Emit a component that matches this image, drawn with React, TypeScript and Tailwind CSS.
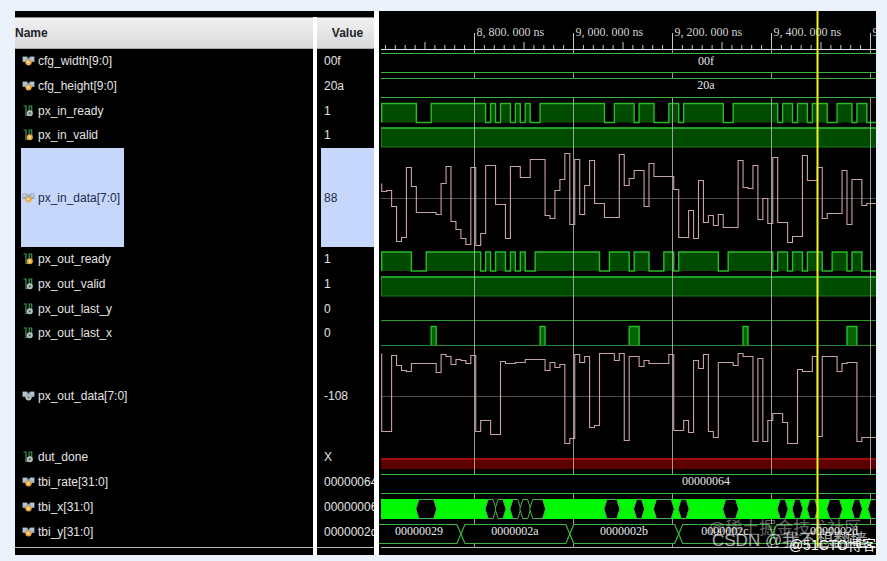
import React from 'react';
import clsx from 'clsx';

interface Signal {
  name: string;
  value: string;
  kind: 'bus' | 'wire';
  port: 'in' | 'out';
  height: string;
  selected?: boolean;
}

type Run = [start: number, level: number];
type Span = [from: number, to: number];

const signals: Signal[] = [
  { name: 'cfg_width[9:0]', value: '00f', kind: 'bus', port: 'in', height: 'h-[25px] pb-0.5' },
  { name: 'cfg_height[9:0]', value: '20a', kind: 'bus', port: 'in', height: 'h-[25px] pb-0.5' },
  { name: 'px_in_ready', value: '1', kind: 'wire', port: 'out', height: 'h-[25px] pb-0.5' },
  { name: 'px_in_valid', value: '1', kind: 'wire', port: 'in', height: 'h-6 pb-0.5' },
  { name: 'px_in_data[7:0]', value: '88', kind: 'bus', port: 'in', height: 'h-[99px]', selected: true },
  { name: 'px_out_ready', value: '1', kind: 'wire', port: 'in', height: 'h-[25px] pb-0.5' },
  { name: 'px_out_valid', value: '1', kind: 'wire', port: 'out', height: 'h-[25px] pb-0.5' },
  { name: 'px_out_last_y', value: '0', kind: 'wire', port: 'out', height: 'h-[25px] pb-0.5' },
  { name: 'px_out_last_x', value: '0', kind: 'wire', port: 'out', height: 'h-6 pb-0.5' },
  { name: 'px_out_data[7:0]', value: '-108', kind: 'bus', port: 'out', height: 'h-[99px]' },
  { name: 'dut_done', value: 'X', kind: 'wire', port: 'out', height: 'h-[25px] pb-0.5' },
  { name: 'tbi_rate[31:0]', value: '00000064', kind: 'bus', port: 'in', height: 'h-[25px] pb-0.5' },
  { name: 'tbi_x[31:0]', value: '00000006', kind: 'bus', port: 'in', height: 'h-[25px] pb-0.5' },
  { name: 'tbi_y[31:0]', value: '0000002d', kind: 'bus', port: 'in', height: 'h-6' },
];

// One sample is 10 ns, 200 ns is 99 units wide
const LAST = 100;
const sampleX = (n: number) => 2.7 + n * 4.95;
const gridX = [95.5, 194.5, 293.5, 392.5, 491.5];
const gridLabels = ['8, 800. 000 ns', '9, 000. 000 ns', '9, 200. 000 ns', '9, 400. 000 ns', '9, 600. 000 ns'];

const inReadyLow: Span[] = [
  [7, 10], [21, 22], [23, 24], [26, 27], [28, 29], [30, 32], [45, 47], [51, 52], [55, 58],
  [60, 61], [69, 71], [80, 81], [83, 84], [86, 87], [90, 92], [95, 96], [98, 101],
];
const outReadyLow: Span[] = inReadyLow.map(([a, b]) => [a - 1, b - 1]);
const lastX: Span[] = [[10, 11], [32, 33], [50, 52], [73, 74], [94, 96]];

const inData: Run[] = [
  [0, 139], [1, 136], [2, 184], [3, 288], [4, 276], [5, 67], [6, 124], [7, 202], [11, 208], [12, 115],
  [13, 62], [14, 229], [15, 253], [16, 279], [17, 297], [18, 65], [19, 299], [20, 264], [21, 59], [23, 178],
  [25, 279], [26, 62], [28, 97], [30, 41], [33, 211], [34, 219], [35, 136], [36, 103], [37, 23], [38, 238],
  [39, 41], [40, 208], [41, 121], [42, 46], [43, 175], [45, 216], [48, 26], [49, 121], [50, 100], [51, 76],
  [53, 184], [54, 53], [55, 94], [59, 133], [60, 276], [62, 196], [63, 279], [64, 106], [65, 231], [66, 210],
  [67, 241], [68, 208], [69, 246], [72, 44], [73, 127], [74, 130], [75, 59], [76, 223], [77, 160], [78, 235],
  [79, 35], [80, 231], [82, 291], [83, 272], [85, 29], [86, 106], [88, 65], [89, 219], [90, 205], [93, 76],
  [94, 238], [95, 103], [97, 181], [98, 175],
];

const outData: Run[] = [
  [0, 259], [2, 29], [3, 59], [4, 74], [5, 77], [6, 53], [11, 80], [12, 27], [13, 32], [14, 56],
  [15, 41], [16, 44], [17, 53], [18, 29], [19, 259], [20, 226], [22, 268], [24, 47], [25, 53], [27, 50],
  [29, 41], [33, 74], [34, 50], [35, 65], [36, 56], [37, 295], [38, 279], [39, 27], [40, 50], [41, 32],
  [42, 246], [43, 241], [44, 23], [47, 44], [48, 23], [49, 286], [50, 32], [52, 62], [53, 44], [54, 53],
  [58, 27], [59, 256], [61, 226], [62, 262], [63, 44], [64, 68], [65, 27], [66, 259], [67, 277], [68, 50],
  [71, 59], [72, 23], [73, 32], [75, 289], [76, 38], [77, 289], [78, 226], [79, 205], [81, 232], [82, 295],
  [84, 71], [85, 77], [87, 32], [88, 274], [89, 32], [92, 77], [93, 53], [94, 50], [96, 289], [97, 277],
];

const tbiX: Span[] = [
  [7, 11], [21, 23], [23, 25], [26, 28], [28, 30], [30, 33], [45, 48], [51, 53], [55, 59], [60, 62],
  [69, 72], [80, 82], [83, 85], [86, 88], [90, 93], [95, 97], [98.3, 104],
];
const tbiXJoints = [23, 28, 30];

const tbiY = [
  { end: 16, label: '00000029', at: 40 },
  { end: 38, label: '0000002a', at: 136 },
  { end: 60, label: '0000002b', at: 245 },
  { end: 79, label: '0000002c', at: 346 },
  { end: 102, label: '0000002d', at: 455 },
];

function SignalIcon({ kind, port }: Pick<Signal, 'kind' | 'port'>) {
  const ball = port === 'in' ? '#efa83c' : '#b9c4bf';
  const shine = port === 'in' ? '#ffe2a6' : '#f2f6f4';

  if (kind === 'bus') {
    return (
      <svg width="13" height="12" viewBox="0 0 13 12" className="shrink-0" aria-hidden="true">
        <path d="M0.500 1.500h4.500l1.500 2 1.500-2h4.500v5.500h-2.500l-1 1.500h-5l-1-1.500h-2.500z" fill="#8fa0ad" />
        <path d="M1 2h3.500v3.500h-3.500zM8.500 2h3.500v3.500h-3.500z" fill="#b4c6d4" />
        <circle cx="6.500" cy="7.500" r="3" fill={ball} />
        <circle cx="6.200" cy="7.200" r="1.200" fill={port === 'in' ? shine : '#7d8b90'} />
      </svg>
    );
  }
  return (
    <svg width="13" height="12" viewBox="0 0 13 12" className="shrink-0" aria-hidden="true">
      <path d="M1.500 1h2.500v9.500h2M7.200 6v-5h2.500v6" fill="none" stroke="#3f9a55" strokeWidth="1.200" />
      <circle cx="7.800" cy="8.300" r="3" fill={ball} />
      <circle cx="7.800" cy="8.300" r="1.200" fill={port === 'in' ? shine : '#5f6f68'} />
    </svg>
  );
}

function SignalTable() {
  return (
    <table className="mt-1.5 w-full table-fixed border-separate border-spacing-0 text-xs text-[#e4e4e4]">
      <thead>
        <tr className="text-left font-bold text-[#22242a]">
          <th className="border-r-4 border-white p-0">
            <div className="flex h-8 items-center border-y border-t-[#8c8c8c] border-b-[#a8a8a8] bg-linear-to-b from-[#f1f1f1] to-[#d9d9d9]">
              Name
            </div>
          </th>
          <th className="w-[57px] p-0">
            <div className="flex h-8 items-center justify-center border-y border-t-[#8c8c8c] border-b-[#a8a8a8] bg-linear-to-b from-[#f1f1f1] to-[#d9d9d9] pl-1">
              Value
            </div>
          </th>
        </tr>
      </thead>
      <tbody>
        {signals.map((signal) => (
          <tr key={signal.name}>
            <td className="border-r-4 border-white py-0 pr-0 pl-1.5">
              <div
                className={clsx(
                  'flex w-[103px] items-center gap-[3px] whitespace-nowrap pl-px',
                  signal.height,
                  signal.selected && 'bg-[#c6d7fb] text-[#1c2a4a]'
                )}
              >
                <SignalIcon kind={signal.kind} port={signal.port} />
                {signal.name}
              </div>
            </td>
            <td className="py-0 pr-0 pl-1">
              <div
                className={clsx(
                  'flex items-center overflow-hidden pl-[3px]',
                  signal.height,
                  signal.selected && 'bg-[#c6d7fb] text-[#1c2a4a]'
                )}
              >
                {signal.value}
              </div>
            </td>
          </tr>
        ))}
        <tr aria-hidden="true">
          <td className="border-r-4 border-white p-0">
            <div className="mb-[7px] h-1 border-b border-[#b4b4b4]" />
          </td>
          <td className="p-0">
            <div className="mb-[7px] h-1 border-b border-[#b4b4b4]" />
          </td>
        </tr>
      </tbody>
    </table>
  );
}

function LogicWave({ low, top }: { low: Span[]; top: number }) {
  const bottom = top + 19;
  let d = `M${sampleX(0)} ${bottom}V${top}`;
  low.forEach(([from, to]) => {
    d += `H${sampleX(from)}V${bottom}H${sampleX(to)}V${top}`;
  });
  return (
    <>
      <path d={`${d}H${sampleX(LAST)}V${bottom}Z`} fill="#004b00" />
      <path d={d} fill="none" stroke="#26bc26" strokeWidth="1.400" />
    </>
  );
}

function SolidWave({ top }: { top: number }) {
  return (
    <>
      <rect x="2.500" y={top} width="500" height="19" fill="#004b00" stroke="#1c7a1c" />
      <path d={`M2 ${top}H502`} stroke="#26bc26" strokeWidth="1.500" />
    </>
  );
}

function AnalogWave({ runs, top, from }: { runs: Run[]; top: number; from: number }) {
  const y = (level: number) => top + Math.round(level / 3) + 0.5;
  let d = `M${sampleX(0)} ${y(from)}`;
  runs.forEach(([, level], i) => {
    const end = i + 1 < runs.length ? runs[i + 1][0] : LAST;
    d += `V${y(level)}H${sampleX(end)}`;
  });
  return <path d={d} fill="none" stroke="#c8a3a3" strokeWidth="1.100" />;
}

function BusLines({ top }: { top: number }) {
  return <path d={`M2 ${top}H502M2 ${top + 19}H502`} stroke="#3cb43c" strokeWidth="1.200" />;
}

function TimeAxis() {
  const ticks = Array.from({ length: 51 }, (_, i) => i - 9);
  return (
    <g>
      <path d="M2 38.500H502" stroke="#e6e6e6" />
      {ticks.map((i) => {
        const x = 95.5 + i * 9.9;
        const length = i % 10 === 0 ? 16 : i % 5 === 0 ? 7 : 4;
        return <path key={i} d={`M${x} 38V${38 - length}`} stroke="#c8c8c8" />;
      })}
      {gridX.map((x, i) => (
        <text key={x} x={x + 2} y="25" fill="#d2d2d2">
          {gridLabels[i]}
        </text>
      ))}
    </g>
  );
}

function TbiX() {
  const top = 488;
  const bottom = 508;
  const mid = 498;
  return (
    <g>
      <rect x="2" y={top} width="500" height="20" fill="#00f800" />
      {tbiXJoints.map((n) => (
        <rect key={n} x={sampleX(n) - 4} y={top} width="8" height="20" fill="#000" />
      ))}
      {tbiX.map(([from, to]) => {
        const a = sampleX(from) - 0.5;
        const b = sampleX(to) + 0.5;
        return (
          <path
            key={from}
            d={`M${a} ${mid}L${a + 3} ${top + 0.5}H${b - 3}L${b} ${mid}L${b - 3} ${bottom - 0.5}H${a + 3}Z`}
            fill="#000"
            stroke="#4fb04f"
          />
        );
      })}
    </g>
  );
}

function TbiY() {
  const top = 513.5;
  const bottom = 532.5;
  return (
    <g>
      {tbiY.map(({ end, label, at }, i) => {
        const a = i === 0 ? -10 : sampleX(tbiY[i - 1].end);
        const b = sampleX(end);
        return (
          <React.Fragment key={label}>
            <path
              d={`M${a} 523L${a + 4} ${top}H${b - 4}L${b} 523L${b - 4} ${bottom}H${a + 4}Z`}
              fill="none"
              stroke="#3cb43c"
              strokeWidth="1.200"
            />
            <text x={at} y="524" textAnchor="middle" fill="#e8e8e8">
              {label}
            </text>
          </React.Fragment>
        );
      })}
    </g>
  );
}

function Waveforms() {
  return (
    <svg
      className="block h-[544px] w-full font-['Liberation_Serif',serif] text-xs"
      role="img"
      aria-label="Waveforms"
    >
      <TimeAxis />
      <BusLines top={42.5} />
      <BusLines top={67.5} />
      <LogicWave low={inReadyLow} top={92.5} />
      <SolidWave top={117} />
      <path d="M2 187.500H502M2 385.500H502" stroke="#4c4c4c" />
      <AnalogWave runs={inData} top={134} from={115} />
      <LogicWave low={outReadyLow} top={241} />
      <SolidWave top={266} />
      <path d="M2 309.500H502" stroke="#2f9a2f" strokeWidth="1.200" />
      <path d="M2 334.500H502" stroke="#2a8a2a" strokeWidth="1.200" />
      {lastX.map(([from, to]) => (
        <path
          key={from}
          d={`M${sampleX(from)} 334V315.500H${sampleX(to)}V334`}
          fill="#006400"
          stroke="#26bc26"
          strokeWidth="1.400"
        />
      ))}
      <AnalogWave runs={outData} top={334} from={25} />
      <rect x="2" y="448" width="500" height="10" fill="#5c0000" />
      <path d="M2 448H502" stroke="#a00c0c" strokeWidth="2" />
      <BusLines top={463.5} />
      <TbiX />
      {gridX.map((x) => (
        <path
          key={x}
          d={`M${x} 39V42M${x} 62V67M${x} 87V463M${x} 483V488M${x} 508V513M${x} 533V536`}
          stroke="#b4b4b4"
          strokeOpacity="0.850"
        />
      ))}
      <TbiY />
      <g fill="#e8e8e8" textAnchor="middle">
        <text x="327" y="54">00f</text>
        <text x="327" y="78">20a</text>
        <text x="327" y="474">00000064</text>
      </g>
      <path d="M2 536.500H502" stroke="#b4b4b4" />
      <path d="M438.500 0V536" stroke="#f4f420" strokeWidth="2" />
    </svg>
  );
}

function Watermarks() {
  return (
    <div className="pointer-events-none absolute right-0 bottom-0 h-10 w-[168px] overflow-hidden whitespace-nowrap">
      <span className="absolute top-1 left-0 text-[17px] leading-5 text-white/40">@稀土掘金技术社区</span>
      <span className="absolute top-4 left-1 text-[17px] leading-5 text-white/65">CSDN @我不想翻墙</span>
      <span className="absolute right-0 bottom-0 text-sm leading-5 text-white">@51CTO博客</span>
    </div>
  );
}

export default function App() {
  return (
    <div className="min-h-screen bg-[#ebf2fb] pt-[11px] pr-[11px] pb-1.5 pl-[15px] font-['Liberation_Sans','Noto_Sans_CJK_SC',sans-serif]">
      <main className="relative flex bg-black">
        <section className="w-[364px] shrink-0 border-r-[5px] border-white">
          <SignalTable />
        </section>
        <section className="min-w-0 flex-1 overflow-hidden">
          <Waveforms />
        </section>
        <Watermarks />
      </main>
    </div>
  );
}
